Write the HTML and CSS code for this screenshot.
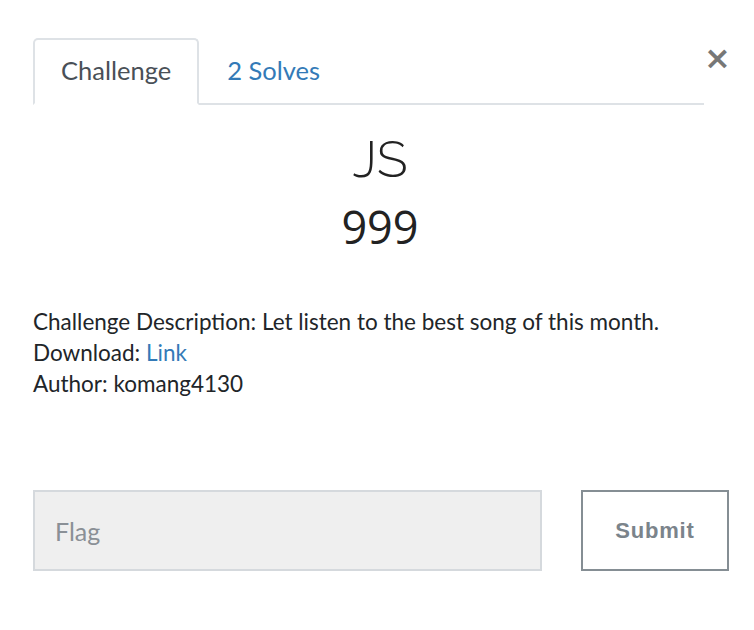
FILE: index.html
```html
<!DOCTYPE html>
<html>
<head>
<meta charset="utf-8">
<link rel="stylesheet" href="styles.css">
</head>
<body>
<div class="modal">
  <div class="header">
    <ul class="tabs">
      <li class="tab active">Challenge</li>
      <li class="tab"><a href="#">2 Solves</a></li>
    </ul>
    <button class="close" aria-label="Close">&times;</button>
  </div>
  <h1 class="title">JS</h1>
  <h2 class="value">999</h2>
  <div class="desc">
    <p>Challenge Description: Let listen to the best song of this month.<br>
    Download: <a href="#">Link</a><br>
    Author: komang4130</p>
  </div>
  <form class="submit-row">
    <input class="flag" type="text" placeholder="Flag">
    <button class="submit" type="button">Submit</button>
  </form>
</div>
</body>
</html>
```
FILE: styles.css
```css
html, body {
  margin: 0;
  padding: 0;
  background: #fff;
}
body {
  font-family: Lato, "Open Sans", sans-serif;
  color: #212529;
}
.modal {
  padding: 38px 27px 0 33px;
}
.header {
  display: flex;
  align-items: flex-start;
}
.tabs {
  flex: 1;
  display: flex;
  list-style: none;
  margin: 0;
  padding: 0;
  border-bottom: 2px solid #dee2e6;
}
.tab {
  font-size: 25.5px;
  line-height: 30px;
  padding: 15px 26px 18px;
  margin-bottom: -2px;
  border: 2px solid transparent;
  border-radius: 5px 5px 0 0;
}
.tab.active {
  color: #495057;
  border-color: #dee2e6 #dee2e6 #fff;
  background: #fff;
}
.tab a {
  color: #337ab7;
  text-decoration: none;
}
.close {
  border: 0;
  background: none;
  padding: 0;
  margin: 6px 0 0 0;
  width: 23px;
  height: 28px;
  font-family: "DejaVu Sans", sans-serif;
  font-size: 32px;
  font-weight: bold;
  line-height: 28px;
  color: #777;
  text-align: right;
}
.title {
  font-family: Raleway, "Open Sans", sans-serif;
  font-weight: 300;
  font-size: 51px;
  line-height: 56px;
  text-align: center;
  margin: 26px 0 0 0;
  color: #222;
}
.value {
  font-family: "Open Sans", sans-serif;
  font-weight: 400;
  font-size: 45px;
  line-height: 52px;
  text-align: center;
  margin: 14px 0 0 0;
  color: #222;
}
.desc p {
  font-size: 22.5px;
  line-height: 31px;
  margin: 53px 0 0 0;
}
.desc a {
  color: #337ab7;
  text-decoration: none;
}
.submit-row {
  display: flex;
  gap: 39px;
  margin-top: 91px;
}
.flag {
  flex: 0 0 509px;
  box-sizing: border-box;
  height: 81px;
  border: 2px solid #d5d9dd;
  background: #efefef;
  padding: 0 20px;
  font-family: Lato, sans-serif;
  font-size: 25px;
  color: #495057;
  outline: none;
}
.flag::placeholder {
  color: #8a9096;
}
.submit {
  flex: 0 0 148px;
  box-sizing: border-box;
  height: 81px;
  border: 2px solid #858e94;
  background: #fff;
  font-family: "Liberation Sans", sans-serif;
  font-weight: bold;
  font-size: 22px;
  color: #7b848b;
  letter-spacing: 0.8px;
}
```
